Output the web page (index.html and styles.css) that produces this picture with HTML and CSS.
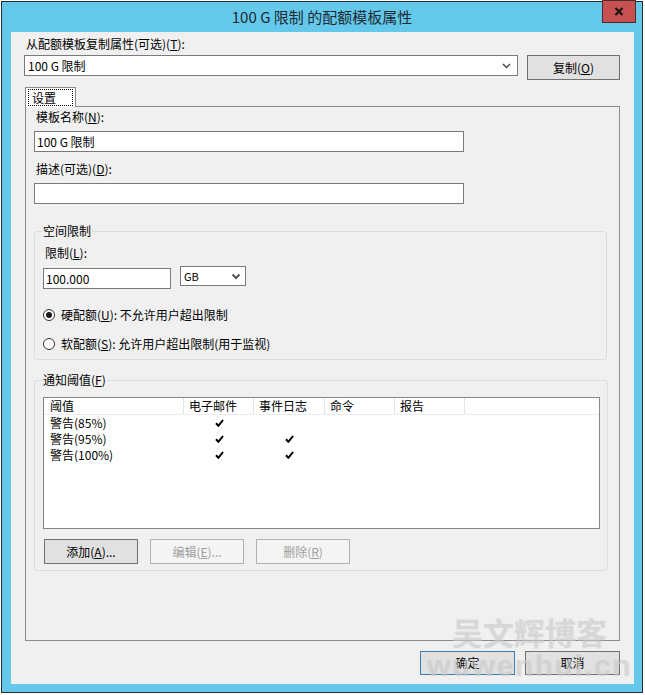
FILE: index.html
```html
<!DOCTYPE html>
<html lang="zh-CN">
<head>
  <meta charset="UTF-8">
  <title>100 G 限制 的配额模板属性</title>
  <link rel="stylesheet" href="styles.css">
</head>

<body>
  <div class="window">
    <div class="titlebar">
      <span class="title">100 G 限制 的配额模板属性</span>
      <a class="close" href="javascript:">
        <svg width="10" height="9" viewBox="0 0 10 9"><path d="M1.5 1 L8.5 8 M8.5 1 L1.5 8" stroke="#161616" stroke-width="2.2" fill="none"/></svg>
      </a>
    </div>

    <div class="client">
      <p class="label">从配额模板复制属性(可选)(<u>T</u>):</p>
      <div class="copy-row">
        <div class="combo">
          <span>100 G 限制</span>
          <svg width="9" height="6" viewBox="0 0 9 6"><polyline points="1,1 4.5,4.5 8,1" stroke="#444" stroke-width="1.4" fill="none"/></svg>
        </div>
        <button class="btn">复制(<u>O</u>)</button>
      </div>

      <div class="tab-nav">
        <span class="tab"><span class="focus">设置</span></span>
      </div>

      <div class="tab-page">
        <p class="label">模板名称(<u>N</u>):</p>
        <div class="textbox">100 G 限制</div>
        <p class="label gap">描述(可选)(<u>D</u>):</p>
        <div class="textbox"></div>

        <fieldset class="group space">
          <legend>空间限制</legend>
          <p class="label">限制(<u>L</u>):</p>
          <div class="limit-row">
            <div class="textbox small">100.000</div>
            <div class="select">
              <span>GB</span>
              <svg width="10" height="7" viewBox="0 0 10 7"><polyline points="1.5,1.5 5,5 8.5,1.5" stroke="#555" stroke-width="2" fill="none"/></svg>
            </div>
          </div>
          <div class="radio first"><span class="dot checked"></span>硬配额(<u>U</u>): 不允许用户超出限制</div>
          <div class="radio"><span class="dot"></span>软配额(<u>S</u>): 允许用户超出限制(用于监视)</div>
        </fieldset>

        <fieldset class="group notify">
          <legend>通知阈值(<u>F</u>)</legend>
          <div class="list">
            <div class="list-head">
              <span>阈值</span><span>电子邮件</span><span>事件日志</span><span>命令</span><span>报告</span><span class="rest"></span>
            </div>
            <div class="list-row">
              <span>警告(85%)</span>
              <span class="check"><svg width="9" height="8" viewBox="0 0 9 8"><path d="M1 4.2 L3.4 6.8 L8 1" stroke="#000" stroke-width="2" fill="none"/></svg></span>
              <span></span>
            </div>
            <div class="list-row">
              <span>警告(95%)</span>
              <span class="check"><svg width="9" height="8" viewBox="0 0 9 8"><path d="M1 4.2 L3.4 6.8 L8 1" stroke="#000" stroke-width="2" fill="none"/></svg></span>
              <span class="check"><svg width="9" height="8" viewBox="0 0 9 8"><path d="M1 4.2 L3.4 6.8 L8 1" stroke="#000" stroke-width="2" fill="none"/></svg></span>
            </div>
            <div class="list-row">
              <span>警告(100%)</span>
              <span class="check"><svg width="9" height="8" viewBox="0 0 9 8"><path d="M1 4.2 L3.4 6.8 L8 1" stroke="#000" stroke-width="2" fill="none"/></svg></span>
              <span class="check"><svg width="9" height="8" viewBox="0 0 9 8"><path d="M1 4.2 L3.4 6.8 L8 1" stroke="#000" stroke-width="2" fill="none"/></svg></span>
            </div>
          </div>
          <div class="btn-row">
            <button class="btn">添加(<u>A</u>)...</button>
            <button class="btn" disabled>编辑(<u>E</u>)...</button>
            <button class="btn" disabled>删除(<u>R</u>)</button>
          </div>
        </fieldset>
      </div>

      <div class="footer">
        <button class="btn default">确定</button>
        <button class="btn">取消</button>
      </div>

      <div class="watermark">
        <span class="wm-cn">吴文辉博客</span>
        <span class="wm-en">wuwenhui.cn</span>
      </div>
    </div>
  </div>
</body>

</html>
```

FILE: styles.css
```css
* {
  margin: 0;
  padding: 0;
  box-sizing: border-box;
}

body {
  background: #fff;
  font: 12px/14px "Noto Sans CJK SC", sans-serif;
  color: #000;
}

.window {
  position: relative;
  width: 642px;
  height: 692px;
  margin: 1px 0 0 1px;
  border: 1px solid #2b2b2b;
  background: #63c8ea;
}

.titlebar {
  height: 30px;
  text-align: center;
}

.title {
  font-size: 15px;
  line-height: 30px;
  color: #1f2a33;
}

.close {
  position: absolute;
  top: -2px;
  right: 6px;
  width: 34px;
  height: 23px;
  background: #c75050;
  border: 1px solid #4a2a2a;
  display: flex;
  align-items: center;
  justify-content: center;
}

.client {
  position: relative;
  height: 652px;
  margin: 0 8px 8px 9px;
  padding: 5px 14px 0 13px;
  background: #f0f0f0;
}

.label {
  padding-left: 2px;
}

.label.gap {
  margin-top: 10px;
}

u {
  text-underline-offset: 1px;
}

.copy-row {
  display: flex;
  gap: 9px;
  margin-top: 4px;
  align-items: flex-start;
}

.combo {
  width: 494px;
  height: 21px;
  border: 1px solid #7a7a7a;
  background: #fff;
  display: flex;
  align-items: center;
  justify-content: space-between;
  padding: 0 6px 0 3px;
}

.btn {
  width: 93px;
  height: 25px;
  background: #e1e1e1;
  border: 1px solid #707070;
  font: inherit;
  color: #000;
}

.btn:disabled {
  background: #f4f4f4;
  border-color: #adb2b5;
  color: #a0a0a0;
}

.btn.default {
  border-color: #3c7fb1;
}

/* 选项卡 */
.tab-nav {
  position: relative;
  z-index: 1;
  height: 20px;
  margin: 7px 0 -1px 1px;
}

.tab {
  display: inline-block;
  width: 51px;
  height: 20px;
  padding: 1px 2px 0;
  background: #fff;
  border: 1px solid #898c95;
  border-bottom: none;
}

.tab .focus {
  display: block;
  height: 17px;
  padding: 1px 0 0 3px;
  border: 1px dotted #000;
  line-height: 14px;
}

.tab-page {
  width: 595px;
  height: 535px;
  margin-left: 1px;
  padding: 3px 0 0 8px;
  border: 1px solid #898c95;
}

.textbox {
  width: 430px;
  height: 21px;
  margin-top: 7px;
  padding-left: 2px;
  border: 1px solid #7a7a7a;
  background: #fff;
  line-height: 19px;
}

/* 分组框 */
.group {
  border: 1px solid #d5dfe5;
  border-radius: 3px;
  padding: 0 7px 8px 8px;
}

.group legend {
  margin-left: -1px;
  padding: 0 1px;
  line-height: 14px;
}

.space {
  width: 573px;
  margin-top: 20px;
}

.space .label {
  margin-top: 8px;
}

.limit-row {
  display: flex;
  align-items: flex-start;
  gap: 9px;
  margin-top: 8px;
}

.textbox.small {
  width: 128px;
  margin-top: 0;
}

.select {
  width: 66px;
  height: 20px;
  margin-top: -2px;
  padding: 0 4px 0 3px;
  border: 1px solid #7a7a7a;
  background: #fff;
  display: flex;
  align-items: center;
  justify-content: space-between;
  font-size: 11px;
}

.radio {
  display: flex;
  align-items: center;
  margin-top: 15px;
  line-height: 14px;
}

.radio.first {
  margin-top: 19px;
}

.dot {
  width: 12px;
  height: 12px;
  margin-right: 6px;
  border: 1px solid #333;
  border-radius: 50%;
  background: #fff;
  display: flex;
  align-items: center;
  justify-content: center;
}

.dot.checked::after {
  content: "";
  width: 6px;
  height: 6px;
  border-radius: 50%;
  background: #1a1a1a;
}

.notify {
  width: 574px;
  margin-top: 13px;
  padding-bottom: 6px;
}

/* 列表 */
.list {
  height: 132px;
  margin-top: 10px;
  border: 1px solid #828790;
  background: #fff;
}

.list-head,
.list-row {
  display: grid;
  grid-template-columns: 140px 70px 71px 70px 70px 1fr;
  height: 16px;
  line-height: 16px;
}

.list-head {
  border-bottom: 1px solid #ececec;
  height: 17px;
}

.list-head span {
  padding-left: 5px;
  border-right: 1px solid #e5e5e5;
}

.list-head span:first-child {
  padding-left: 6px;
}

.list-head .rest {
  border-right: none;
}

.list-row span:first-child {
  padding-left: 6px;
}

.list-row .check {
  display: flex;
  align-items: center;
  justify-content: center;
}

.btn-row {
  display: flex;
  gap: 12px;
  margin: 10px 0 0 1px;
}

.btn-row .btn {
  width: 94px;
}

.footer {
  display: flex;
  justify-content: flex-end;
  gap: 10px;
  margin-top: 10px;
}

.footer .btn {
  width: 95px;
  height: 24px;
}

/* 水印 */
.watermark {
  position: absolute;
  right: 2px;
  bottom: 1px;
  display: flex;
  flex-direction: column;
  align-items: center;
  pointer-events: none;
  color: rgba(215, 215, 215, 0.45);
  text-shadow: 0 0 1px rgba(170, 170, 170, 0.35);
}

.wm-cn {
  font: bold 31px/35px "Noto Sans CJK SC", sans-serif;
}

.wm-en {
  font: bold 30px/34px "Liberation Sans", sans-serif;
  letter-spacing: 1.5px;
}
```
